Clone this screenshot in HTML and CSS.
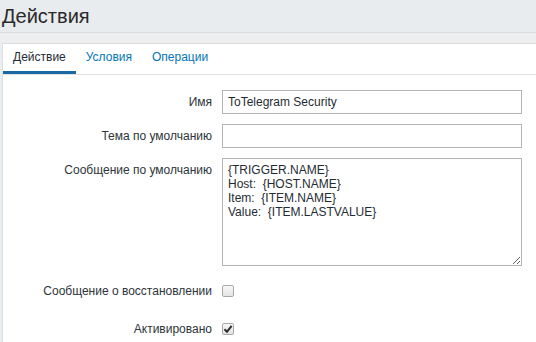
FILE: index.html
```html
<!DOCTYPE html>
<html lang="ru">
<head>
  <meta charset="UTF-8">
  <title>Действия</title>
  <link rel="stylesheet" href="styles.css">
</head>
<body>
  <header class="page-header">
    <h1>Действия</h1>
  </header>
  <div class="band"></div>
  <main class="panel">
    <ul class="tabs">
      <li class="tab active">Действие</li>
      <li class="tab">Условия</li>
      <li class="tab">Операции</li>
    </ul>
    <form class="form-list">
      <label class="form-label" for="name">Имя</label>
      <input class="text-input" id="name" type="text" value="ToTelegram Security">

      <label class="form-label" for="subject">Тема по умолчанию</label>
      <input class="text-input" id="subject" type="text" value="">

      <label class="form-label" for="message">Сообщение по умолчанию</label>
      <textarea class="text-area" id="message">{TRIGGER.NAME}
Host:  {HOST.NAME}
Item:  {ITEM.NAME}
Value:  {ITEM.LASTVALUE}</textarea>

      <span class="form-label check-row">Сообщение о восстановлении</span>
      <span class="check-row"><span class="checkbox"></span></span>

      <span class="form-label check-row">Активировано</span>
      <span class="check-row">
        <span class="checkbox">
          <svg width="10" height="10" viewBox="0 0 10 10"><path d="M1.5 5.2 L4 7.8 L8.6 1.8" fill="none" stroke="#2b2b2b" stroke-width="2"/></svg>
        </span>
      </span>
    </form>
  </main>
</body>
</html>
```

FILE: styles.css
```css
:root {
  --text-color: #1f2c33;
  --link-color: #0275b8;
  --tab-active: #1a69a4;
  --border-color: #b4b4b4;
  --page-bg: #ebeef0;
  --font-family: "Liberation Sans", Arial, sans-serif;
}

* {
  box-sizing: border-box;
  margin: 0;
  padding: 0;
}

body {
  font-family: var(--font-family);
  font-size: 12px;
  color: var(--text-color);
  background-color: var(--page-bg);
  overflow: hidden;
}

.page-header {
  height: 33px;
  background-color: #e9ecef;
  border-bottom: 1px solid #d8dce0;
  padding-left: 2px;
}

h1 {
  font-size: 20px;
  font-weight: normal;
  line-height: 32px;
  color: #2a2a2a;
}

.band {
  height: 10px;
  background-color: #eceeef;
}

.panel {
  background-color: #fff;
  margin-left: 2px;
  border-left: 1px solid #dcdfe2;
  border-top: 1px solid #dcdcdc;
  height: 299px;
}

/* tabs */
.tabs {
  display: flex;
  list-style: none;
  border-bottom: 1px solid #e2e2e2;
}

.tab {
  padding: 0 10px;
  line-height: 27px;
  border-bottom: 3px solid transparent;
  color: var(--link-color);
}

.tab.active {
  color: var(--text-color);
  border-bottom-color: var(--tab-active);
}

/* form */
.form-list {
  display: grid;
  grid-template-columns: 209px 300px;
  column-gap: 10px;
  row-gap: 10px;
  padding-top: 15px;
}

.form-label {
  text-align: right;
  line-height: 24px;
  align-self: start;
  color: #2d3438;
}

.text-input {
  height: 24px;
  border: 1px solid var(--border-color);
  padding: 0 5px;
  font-family: var(--font-family);
  font-size: 12px;
  color: var(--text-color);
  background: #fff;
  outline: none;
}

.text-area {
  height: 108px;
  border: 1px solid var(--border-color);
  padding: 4px 5px;
  font-family: var(--font-family);
  font-size: 12px;
  line-height: 14px;
  color: var(--text-color);
  background: #fff;
  outline: none;
}

.check-row {
  height: 26px;
  line-height: 26px;
  margin-top: 2px;
  display: flex;
  align-items: center;
}

.form-label.check-row {
  justify-content: flex-end;
}

.checkbox {
  width: 12px;
  height: 12px;
  border: 1px solid #a9a9a9;
  border-radius: 2px;
  background: linear-gradient(#f7f7f7, #e4e4e4);
  display: flex;
  align-items: center;
  justify-content: center;
}
```
